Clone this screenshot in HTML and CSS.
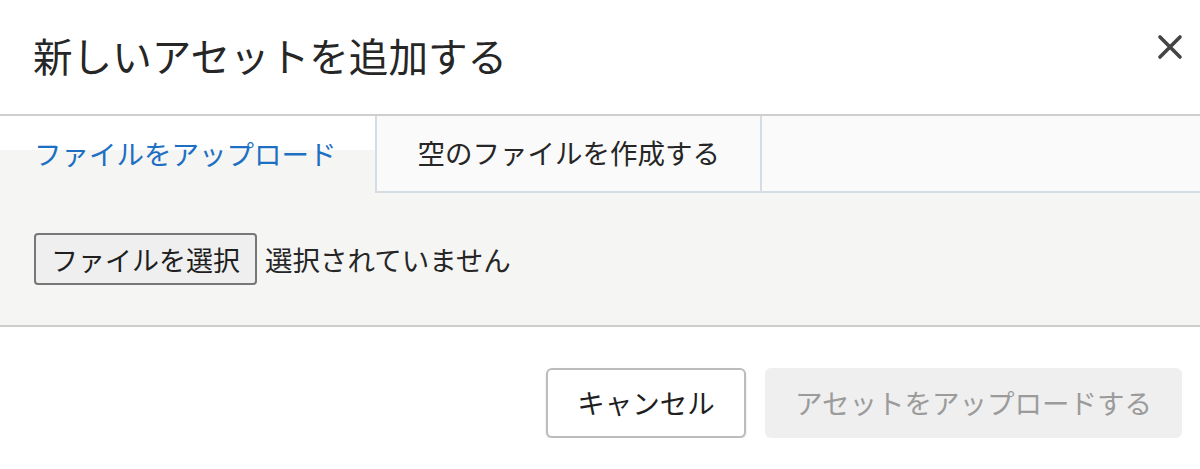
FILE: index.html
```html
<!DOCTYPE html>
<html lang="ja">
<head>
<meta charset="utf-8">
<title>新しいアセットを追加する</title>
<link rel="stylesheet" href="styles.css">
</head>
<body>
<div class="dialog">
  <div class="header">
    <h1 class="title">新しいアセットを追加する</h1>
    <button class="close" aria-label="閉じる">
      <svg width="26" height="26" viewBox="0 0 26 26"><path d="M3 3L23 23M23 3L3 23" stroke="#444" stroke-width="3.6" stroke-linecap="round" fill="none"/></svg>
    </button>
  </div>
  <div class="tabs">
    <div class="tab active">ファイルをアップロード</div>
    <div class="tab">空のファイルを作成する</div>
    <div class="tab-fill"></div>
  </div>
  <div class="panel">
    <span class="file-btn">ファイルを選択</span>
    <span class="file-none">選択されていません</span>
  </div>
  <div class="footer">
    <button class="btn cancel">キャンセル</button>
    <button class="btn upload" disabled>アセットをアップロードする</button>
  </div>
</div>
</body>
</html>
```
FILE: styles.css
```css
html, body {
  margin: 0;
  padding: 0;
  background: #fff;
}
body {
  font-family: "Noto Sans CJK JP", "Noto Sans", sans-serif;
  color: #333;
}
.dialog {
  width: 1200px;
}
.header {
  height: 114px;
  display: flex;
  align-items: center;
  justify-content: space-between;
  padding: 0 16px 0 33px;
  border-bottom: 2px solid #cfcfcf;
}
.title {
  margin: 0 0 5px;
  font-size: 39.6px;
  font-weight: 400;
  color: #262626;
  line-height: 1;
}
.close {
  border: 0;
  background: none;
  padding: 0;
  width: 28px;
  height: 28px;
  display: flex;
  align-items: center;
  justify-content: center;
  margin-top: -20px;
}
.tabs {
  display: flex;
  height: 75px;
  background: #fafafa;
  border-bottom: 2px solid #d5dce3;
}
.tab {
  display: flex;
  align-items: center;
  padding: 0 40px 0 41px;
  font-size: 27.5px;
  color: #262626;
  border-right: 2px solid #d5dce3;
  line-height: 1;
  padding-bottom: 2px;
}
.tab.active {
  padding-left: 34px;
  padding-right: 38px;
  color: #1c6fc2;
  background: linear-gradient(#fff 0 34px, #f5f5f4 34px);
  margin-bottom: -2px;
}
.tab-fill {
  flex: 1;
}
.panel {
  background: #f5f5f4;
  height: 134px;
  display: flex;
  align-items: center;
  padding: 0 34px;
  border-bottom: 2px solid #cdcdcd;
  box-sizing: border-box;
}
.file-btn {
  display: inline-flex;
  align-items: center;
  height: 52px;
  box-sizing: border-box;
  padding: 0 15px;
  font-size: 27px;
  color: #1f1f1f;
  background: #efefef;
  border: 2px solid #777;
  border-radius: 4px;
}
.file-none {
  margin-left: 8px;
  font-size: 27.5px;
  color: #262626;
}
.footer {
  display: flex;
  justify-content: flex-end;
  gap: 19px;
  padding: 41px 18px 0 0;
}
.btn {
  font-family: "Noto Sans CJK JP", "Noto Sans", sans-serif;
  font-size: 27.5px;
  height: 70px;
  border-radius: 6px;
  box-sizing: border-box;
  line-height: 1;
}
.cancel {
  width: 200px;
  background: #fff;
  color: #1f1f1f;
  border: 2px solid #bcbcbc;
  box-shadow: 0 1px 2px rgba(0,0,0,0.15);
}
.upload {
  width: 417px;
  background: #efefef;
  color: #9b9b9b;
  border: 0;
}
```
